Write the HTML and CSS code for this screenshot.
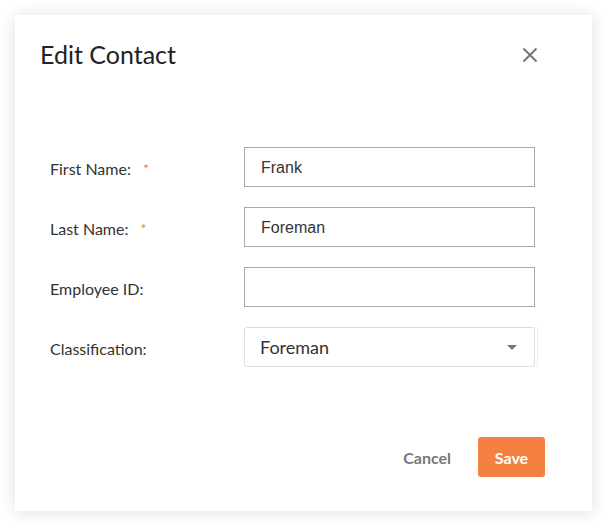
FILE: index.html
```html
<!DOCTYPE html>
<html lang="en">
<head>
<meta charset="utf-8">
<title>Edit Contact</title>
<link rel="stylesheet" href="styles.css">
</head>
<body>
<div class="modal">
  <div class="modal-header">
    <h1 class="modal-title">Edit Contact</h1>
    <button class="close-btn" aria-label="Close">
      <svg width="16" height="16" viewBox="0 0 16 16"><path d="M1.5 1.5 L14.5 14.5 M14.5 1.5 L1.5 14.5" stroke="#777" stroke-width="2" fill="none"/></svg>
    </button>
  </div>
  <form class="form">
    <label class="label">First Name: <span class="req">*</span></label>
    <input class="input" type="text" value="Frank">
    <label class="label">Last Name: <span class="req">*</span></label>
    <input class="input" type="text" value="Foreman">
    <label class="label">Employee ID:</label>
    <input class="input" type="text" value="">
    <label class="label">Classification:</label>
    <div class="select">
      <span class="select-value">Foreman</span>
      <span class="caret"></span>
    </div>
  </form>
  <div class="modal-footer">
    <button class="btn-cancel" type="button">Cancel</button>
    <button class="btn-save" type="button">Save</button>
  </div>
</div>
</body>
</html>
```
FILE: styles.css
```css
* { box-sizing: border-box; }
html, body { margin: 0; background: #fff; }
body {
  padding: 15px;
  font-family: Lato, "Liberation Sans", sans-serif;
  color: #333;
}
.modal {
  width: 577px;
  height: 496px;
  background: #fff;
  box-shadow: 0 1px 16px rgba(0, 0, 0, 0.13);
  display: flex;
  flex-direction: column;
}
.modal-header {
  display: flex;
  align-items: center;
  justify-content: space-between;
  padding: 24px 54px 0 25px;
}
.modal-title {
  margin: 0;
  font-size: 25px;
  font-weight: 400;
  line-height: 30px;
  color: #222;
}
.close-btn {
  border: 0;
  background: none;
  padding: 0;
  width: 16px;
  height: 16px;
  display: flex;
  margin-top: 1px;
}
.form {
  display: grid;
  grid-template-columns: 194px 291px;
  grid-auto-rows: 40px;
  row-gap: 20px;
  align-items: center;
  padding: 78px 0 0 35px;
  margin: 0;
}
.label {
  font-size: 16px;
  color: #333;
  padding-top: 2px;
}
.req {
  color: #f47f41;
  margin-left: 8px;
  font-size: 14px;
  position: relative;
  top: -1px;
}
.input {
  height: 40px;
  width: 291px;
  border: 1px solid #a9a9a9;
  border-radius: 0;
  padding: 1px 16px 0;
  font-family: "Liberation Sans", Arial, sans-serif;
  font-size: 16px;
  color: #333;
  background: #fff;
  outline: none;
}
.select {
  height: 40px;
  width: 291px;
  border: 1px solid #ddd;
  border-radius: 3px;
  display: flex;
  align-items: center;
  justify-content: space-between;
  padding: 0 17px 0 15px;
  box-shadow: 2px 0 0 0 #fff, 3px 0 0 0 #e8eef6;
}
.select-value {
  font-size: 18px;
  color: #333;
}
.caret {
  width: 0;
  height: 0;
  border-left: 5px solid transparent;
  border-right: 5px solid transparent;
  border-top: 5px solid #777;
}
.modal-footer {
  margin-top: auto;
  display: flex;
  justify-content: flex-end;
  align-items: center;
  gap: 27px;
  padding: 0 47px 34px 0;
}
.btn-cancel {
  border: 0;
  background: none;
  padding: 0;
  font-family: Lato, sans-serif;
  font-weight: 700;
  font-size: 16px;
  color: #777;
}
.btn-save {
  width: 67px;
  height: 40px;
  border: 0;
  border-radius: 3px;
  background: #f48042;
  color: #fff;
  font-family: Lato, sans-serif;
  font-weight: 700;
  font-size: 16px;
  padding: 0;
}
```
